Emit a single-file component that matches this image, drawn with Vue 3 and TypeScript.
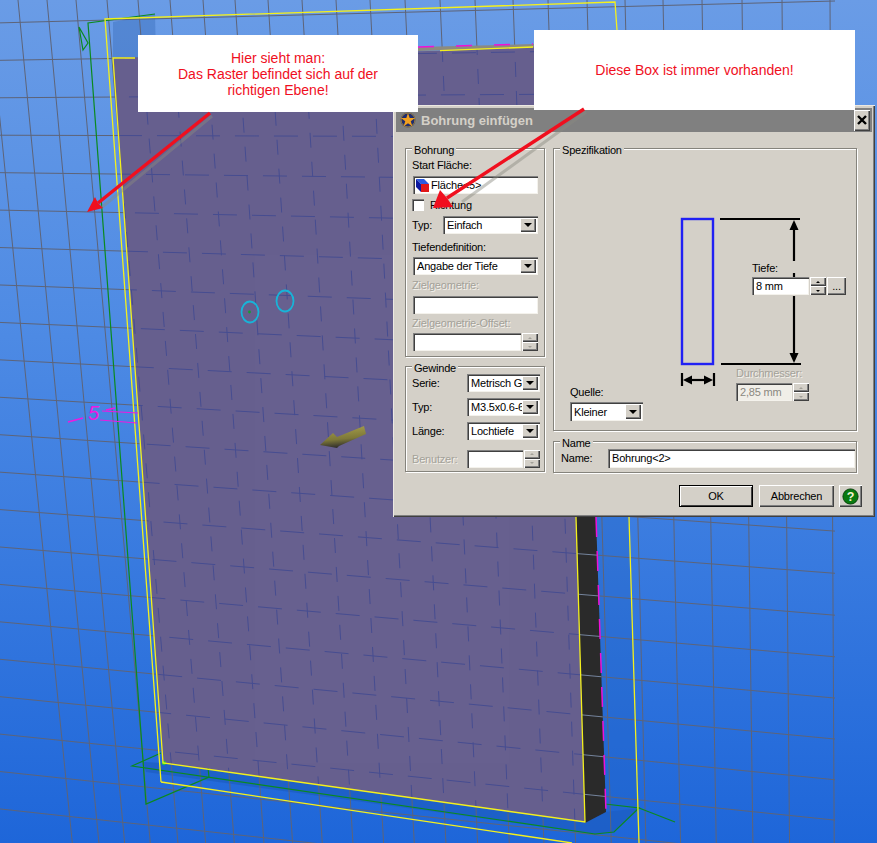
<template>
  <div class="desktop">
    <svg class="scene" width="877" height="843" viewBox="0 0 877 843">
      <defs>
        <linearGradient id="sky" x1="0" y1="0" x2="0" y2="1">
          <stop offset="0" stop-color="#6a9ce6" />
          <stop offset="0.4" stop-color="#4d8ae4" />
          <stop offset="1" stop-color="#1e66d9" />
        </linearGradient>
        <linearGradient id="shaft" x1="0.3" y1="0" x2="0.5" y2="1">
          <stop offset="0" stop-color="#a8a04c" />
          <stop offset="0.6" stop-color="#7d7838" />
          <stop offset="1" stop-color="#26242c" />
        </linearGradient>
        <clipPath id="faceClip"><polygon :points="facePoints" /></clipPath>
        <clipPath id="sideClip"><polygon :points="sidePoints" /></clipPath>
      </defs>

      <rect width="877" height="843" fill="url(#sky)" />

      <!-- shadow bands round the part -->
      <polygon points="113,22 155,14 156,58 113,58" fill="#2f62b0" opacity="0.35" />
      <polygon points="596,517 629,517 639,808 606,812" fill="#1f5fc0" opacity="0.3" />
      <polygon points="143,762 163,763 585,823 606,812 640,808 614,832 595,834 146,772" fill="#1d5cc0" opacity="0.7" />

      <!-- grid -->
      <g stroke="#5e6478" stroke-width="1" fill="none">
        <line v-for="l in gridLines" :key="l.id" :x1="l.x1" :y1="l.y1" :x2="l.x2" :y2="l.y2" />
      </g>

      <!-- part -->
      <polygon :points="sidePoints" fill="#2a2a2a" />
      <g clip-path="url(#sideClip)" stroke="#75849c" stroke-width="1">
        <line v-for="l in hLines" :key="l.id" :x1="l.x1" :y1="l.y1" :x2="l.x2" :y2="l.y2" />
      </g>
      <polygon :points="facePoints" fill="#67608f" />
      <polygon points="418,47 535,44 535,47.5 418,51" fill="#8c8a80" />
      <g clip-path="url(#faceClip)" stroke="#414a92" stroke-width="1" opacity="0.85">
        <line
          v-for="(l, i) in vLines"
          :key="l.id"
          :x1="l.x1"
          :y1="l.y1"
          :x2="l.x2"
          :y2="l.y2"
          stroke-dasharray="15 14"
          :stroke-dashoffset="i * 7"
        />
        <line
          v-for="(l, i) in hLines"
          :key="l.id"
          :x1="l.x1"
          :y1="l.y1"
          :x2="l.x2"
          :y2="l.y2"
          stroke-dasharray="24 15"
          :stroke-dashoffset="i * 11"
        />
      </g>

      <!-- green construction plane -->
      <g stroke="#0b8a1e" stroke-width="1.2" fill="none">
        <polyline points="155,14 88,23 143,760 146,804 209,777 208,768" />
        <polyline points="79,27 88,43 83,50 79,27" />
        <polyline points="161,753 132,766 595,834 614,832 639,808 605,804" />
        <line x1="639" y1="808" x2="675" y2="822" />
      </g>
      <circle cx="164" cy="763" r="2" fill="#22e022" />

      <!-- yellow outlines -->
      <g stroke="#f4f01c" stroke-width="1.3" fill="none">
        <polyline points="161,782 105,19 615,2 617,30" />
        <polyline points="629,517 639,843" />
        <polyline points="161,782 572,843" />
        <polyline points="135,58 113,58 163,763 585,822 576,517" />
        <polyline points="440,50.7 533,47" />
      </g>
      <polyline points="596,517 606,812" stroke="#f010d8" stroke-width="1.5" stroke-dasharray="20 14" fill="none" />
      <polyline points="418,47 533,44" stroke="#f010d8" stroke-width="1.5" stroke-dasharray="16 22" fill="none" />

      <!-- sketch circles -->
      <ellipse cx="250" cy="312" rx="8.5" ry="10.5" fill="none" stroke="#18b4d8" stroke-width="1.8" />
      <ellipse cx="285" cy="301" rx="8.5" ry="10.5" fill="none" stroke="#18b4d8" stroke-width="1.8" />
      <circle cx="249.5" cy="312" r="1.4" fill="#12a030" />

      <!-- dimension -->
      <g stroke="#f018e0" stroke-width="1" fill="#f018e0">
        <line x1="102" y1="411" x2="138" y2="413" />
        <line x1="100" y1="420" x2="137" y2="423" />
        <line x1="68" y1="422" x2="83" y2="418" stroke-width="1.6" />
        <line x1="106" y1="410" x2="115" y2="408" stroke-width="1.6" />
      </g>
      <text x="88" y="420" class="dim-text">5</text>

      <!-- direction arrow -->
      <polygon points="320,445 333,433 337,437 364,426 366,434 339,446 337,448" fill="url(#shaft)" />
    </svg>

    <div class="dialog">
      <div class="titlebar">
        <svg class="title-icon" width="16" height="16" viewBox="0 0 17 17">
          <circle cx="8.5" cy="8.5" r="8" fill="#1f2c6e" />
          <circle cx="8.5" cy="8.5" r="7.4" fill="none" stroke="#c8a030" stroke-width="0.8" />
          <path d="M8.5 1 L10.3 6.4 L16 6.4 L11.4 9.8 L13.2 15.4 L8.5 12 L3.8 15.4 L5.6 9.8 L1 6.4 L6.7 6.4 Z" fill="#f0a020" />
        </svg>
        <span class="title-text">Bohrung einfügen</span>
        <button class="close raised">
          <svg width="10" height="10" viewBox="0 0 10 10"><path d="M1 1 L9 9 M9 1 L1 9" stroke="#000" stroke-width="2.4" /></svg>
        </button>
      </div>

      <div class="body">
        <div class="col-left">
          <div class="group bohrung">
            <span class="legend">Bohrung</span>
            <div class="label">Start Fläche:</div>
            <div class="field face-field m4">
              <svg width="15" height="15" viewBox="0 0 15 15">
                <polygon points="1,1 9,1 14,6 6,6" fill="#2a5ae0" />
                <polygon points="1,1 6,6 6,14 1,9" fill="#0c18a0" />
                <rect x="6" y="6" width="8" height="8" fill="#e01818" />
              </svg>
              <span>Fläche&lt;5&gt;</span>
            </div>
            <div class="check-row m4">
              <span class="checkbox"></span>
              <span>Richtung</span>
            </div>
            <div class="type-row m5">
              <span>Typ:</span>
              <div class="combo"><span class="combo-text">Einfach</span><span class="combo-btn raised"><i class="tri"></i></span></div>
            </div>
            <div class="label m6">Tiefendefinition:</div>
            <div class="combo m3"><span class="combo-text">Angabe der Tiefe</span><span class="combo-btn raised"><i class="tri"></i></span></div>
            <div class="label off m3">Zielgeometrie:</div>
            <div class="field m4"></div>
            <div class="label off m2">Zielgeometrie-Offset:</div>
            <div class="spin-row m3">
              <div class="field"></div>
              <div class="spinner off-spin"><span class="raised"><i class="tri up"></i></span><span class="raised"><i class="tri"></i></span></div>
            </div>
          </div>

          <div class="group gewinde">
            <span class="legend">Gewinde</span>
            <div v-for="row in threadRows" :key="row.label" class="thread-row">
              <span>{{ row.label }}</span>
              <div class="combo"><span class="combo-text">{{ row.value }}</span><span class="combo-btn raised"><i class="tri"></i></span></div>
            </div>
            <div class="thread-row user-row">
              <span class="off">Benutzer:</span>
              <div class="spin-row">
                <div class="field"></div>
                <div class="spinner off-spin"><span class="raised"><i class="tri up"></i></span><span class="raised"><i class="tri"></i></span></div>
              </div>
            </div>
          </div>
        </div>

        <div class="col-right">
          <div class="group spec">
            <span class="legend">Spezifikation</span>
            <svg class="drawing" width="304" height="283" viewBox="553 148 304 283">
              <rect x="682" y="219" width="31" height="145" fill="none" stroke="#2020f4" stroke-width="2.4" />
              <g stroke="#000" stroke-width="2.2" fill="#000">
                <line x1="720" y1="219" x2="800" y2="219" />
                <line x1="721" y1="364" x2="801" y2="364" />
                <line x1="794" y1="225" x2="794" y2="261" />
                <line x1="794" y1="273" x2="794" y2="277" />
                <line x1="794" y1="296" x2="794" y2="358" />
                <line x1="682" y1="373" x2="682" y2="386" />
                <line x1="714" y1="373" x2="714" y2="386" />
                <line x1="688" y1="380" x2="708" y2="380" />
              </g>
              <polygon points="794,220 789.5,230 798.5,230" fill="#000" />
              <polygon points="794,363 789.5,353 798.5,353" fill="#000" />
              <polygon points="683,380 692,375.5 692,384.5" fill="#000" />
              <polygon points="713,380 704,375.5 704,384.5" fill="#000" />
            </svg>

            <div class="depth">
              <span class="label">Tiefe:</span>
              <div class="depth-row">
                <div class="field value">8 mm</div>
                <div class="spinner"><span class="raised"><i class="tri up"></i></span><span class="raised"><i class="tri"></i></span></div>
                <button class="dots raised">...</button>
              </div>
            </div>

            <div class="diameter">
              <span class="label off">Durchmesser:</span>
              <div class="depth-row">
                <div class="field value off-value">2,85 mm</div>
                <div class="spinner off-spin"><span class="raised"><i class="tri up"></i></span><span class="raised"><i class="tri"></i></span></div>
              </div>
            </div>

            <div class="source">
              <span class="label">Quelle:</span>
              <div class="combo"><span class="combo-text">Kleiner</span><span class="combo-btn raised"><i class="tri"></i></span></div>
            </div>
          </div>

          <div class="group name">
            <span class="legend">Name</span>
            <span class="name-label">Name:</span>
            <div class="field value">Bohrung&lt;2&gt;</div>
          </div>
        </div>
      </div>

      <div class="footer">
        <button class="btn default">OK</button>
        <button class="btn raised">Abbrechen</button>
        <button class="btn help raised">
          <svg width="17" height="17" viewBox="0 0 19 19">
            <circle cx="9.5" cy="9.5" r="8.5" fill="#0a7a10" stroke="#043c08" />
            <text x="9.5" y="14.5" text-anchor="middle" class="help-mark">?</text>
          </svg>
        </button>
      </div>
    </div>

    <div class="callout callout-left">
      <span>Hier sieht man:<br />Das Raster befindet sich auf der<br />richtigen Ebene!</span>
    </div>

    <div class="callout callout-right">
      <span>Diese Box ist immer vorhanden!</span>
    </div>

    <!-- red annotation arrows sit over the dialog -->
    <svg class="arrows" width="877" height="843" viewBox="0 0 877 843">
      <g stroke="#8a8a80" stroke-width="3" opacity="0.45">
        <line x1="212" y1="116" x2="101" y2="208" />
        <line x1="586" y1="112" x2="462" y2="202" />
      </g>
      <g stroke="#f00f1e" stroke-width="3.4">
        <line x1="210" y1="113" x2="98" y2="203" />
        <line x1="584" y1="109" x2="447" y2="198" />
      </g>
      <polygon points="87,212 95,197 98,203 103,208" fill="#f00f1e" />
      <polygon points="433,208 440,190 447,198 453,207" fill="#f00f1e" />
    </svg>
  </div>
</template>

<script setup lang="ts">
type Seg = { id: string; x1: number; y1: number; x2: number; y2: number };

const facePoints = "113,58 440,50.7 562,46 576,517 585,822 163,763";
const sidePoints = "576,517 596,517 606,812 585,823";

const threadRows = [
  { label: "Serie:", value: "Metrisch G" },
  { label: "Typ:", value: "M3.5x0.6-6" },
  { label: "Länge:", value: "Lochtiefe" },
];

// Grid lines read off the picture: x at the top edge of each vertical line
const topX = [-12, 18, 47, 76, 107, 138, 170, 203, 235, 268, 302, 336, 370, 405, 440, 475, 513, 548, 587, 625, 663, 702, 742, 782, 830];

const vLines: Seg[] = topX.map((x, i) => {
  // verticals lean less the further right they are
  const lean = 0.1 - (0.095 * i) / (topX.length - 1);
  return { id: `v${i}`, x1: x, y1: 0, x2: x + lean * 843, y2: 843 };
});

const hLines: Seg[] = Array.from({ length: 22 }, (_, j) => ({
  id: `h${j}`,
  x1: -5,
  y1: 23 + 37.4 * j,
  x2: 835,
  y2: 1 + 46 * j - 0.152 * j * j,
}));

const gridLines = [...vLines, ...hLines];
</script>

<style>
html,
body {
  margin: 0;
  background: #3a7ae0;
}
</style>

<style scoped>
.desktop {
  position: relative;
  width: 877px;
  height: 843px;
  overflow: hidden;
  font-family: "Liberation Sans", Arial, sans-serif;
  font-size: 11px;
  letter-spacing: -0.2px;
  color: #000;
}

.scene,
.arrows {
  position: absolute;
  left: 0;
  top: 0;
}

.arrows {
  pointer-events: none;
}

.dim-text {
  font: italic 20px "Liberation Sans", sans-serif;
  fill: #f018e0;
}

.callout {
  position: absolute;
  display: flex;
  align-items: center;
  justify-content: center;
  background: #fff;
  color: #f00f1e;
  text-align: center;
  font-size: 14px;
  letter-spacing: 0;
  line-height: 16px;
}

.callout-left {
  left: 138px;
  top: 35px;
  width: 280px;
  height: 77px;
}

.callout-right {
  left: 534px;
  top: 30px;
  width: 321px;
  height: 80px;
}

.dialog {
  position: absolute;
  left: 393px;
  top: 105px;
  width: 482px;
  height: 412px;
  box-sizing: border-box;
  background: #d4d0c8;
  box-shadow: inset 1px 1px 0 #ece9e2, inset -1px -1px 0 #404040, inset -2px -2px 0 #808080;
}

.titlebar {
  display: flex;
  align-items: center;
  height: 24px;
  margin: 3px 3px 0;
  padding: 0 2px 0 3px;
  background: #808080;
}

.title-icon {
  margin-left: 1px;
}

.title-text {
  margin-left: 5px;
  font-size: 13px;
  font-weight: 700;
  letter-spacing: 0;
  color: #d4d0c8;
}

.raised {
  box-sizing: border-box;
  background: #d4d0c8;
  box-shadow: inset 1px 1px 0 #fff, inset -1px -1px 0 #404040, inset -2px -2px 0 #808080;
}

button {
  border: 0;
  padding: 0;
  font: inherit;
  letter-spacing: inherit;
  color: inherit;
}

.close {
  display: flex;
  align-items: center;
  justify-content: center;
  width: 16px;
  height: 21px;
  margin-left: auto;
}

.body {
  display: grid;
  grid-template-columns: 140px 304px;
  column-gap: 8px;
  padding: 16px 0 0 12px;
}

.col-left,
.col-right {
  display: flex;
  flex-direction: column;
}

.col-left {
  gap: 9px;
}

.col-right {
  gap: 10px;
}

.group {
  position: relative;
  box-sizing: border-box;
  border: 1px solid #85837c;
  box-shadow: 1px 1px 0 #fff, inset 1px 1px 0 #fff;
}

.legend {
  position: absolute;
  left: 6px;
  top: -6px;
  padding: 0 2px;
  background: #d4d0c8;
  line-height: 14px;
}

.bohrung {
  height: 209px;
  padding: 9px 6px 0;
}

.gewinde {
  display: flex;
  flex-direction: column;
  gap: 6px;
  height: 106px;
  padding: 6px 4px 0 6px;
}

.label {
  height: 14px;
  line-height: 14px;
  white-space: nowrap;
}

.off {
  color: #a3a199;
  text-shadow: 1px 1px 0 #f4f2ec;
}

.m2 { margin-top: 2px; }
.m3 { margin-top: 3px; }
.m4 { margin-top: 4px; }
.m5 { margin-top: 5px; }
.m6 { margin-top: 6px; }

.field,
.combo {
  box-sizing: border-box;
  display: flex;
  align-items: center;
  height: 18px;
  background: #fff;
  box-shadow: inset 1px 1px 0 #808080, inset 2px 2px 0 #404040, inset -1px -1px 0 #f4f2ec;
}

.bohrung > .field,
.bohrung > .combo,
.spin-row {
  margin-left: 1px;
}

.bohrung > .field,
.bohrung > .combo {
  width: 125px;
}

.face-field {
  padding-left: 2px;
  gap: 1px;
}

.check-row {
  display: flex;
  align-items: center;
  gap: 6px;
  height: 13px;
}

.checkbox {
  box-sizing: border-box;
  width: 12px;
  height: 12px;
  background: #fff;
  box-shadow: inset 1px 1px 0 #808080, inset 2px 2px 0 #404040;
}

.type-row {
  display: flex;
  align-items: center;
  justify-content: space-between;
  height: 18px;
}

.type-row .combo {
  width: 95px;
}

.combo {
  padding: 2px;
}

.combo-text {
  flex: 1;
  min-width: 0;
  padding-left: 2px;
  white-space: nowrap;
}

.combo-btn {
  display: flex;
  align-items: center;
  justify-content: center;
  flex: none;
  width: 16px;
  height: 100%;
}

.tri {
  width: 0;
  height: 0;
  border-left: 4px solid transparent;
  border-right: 4px solid transparent;
  border-top: 4px solid #000;
}

.spin-row {
  display: flex;
  gap: 1px;
}

.spin-row .field {
  flex: 1;
  height: 18px;
}

.spinner {
  display: flex;
  flex: none;
  flex-direction: column;
  width: 16px;
  height: 18px;
}

.spinner span {
  display: flex;
  align-items: center;
  justify-content: center;
  height: 9px;
}

.spinner .tri {
  border-left-width: 2.5px;
  border-right-width: 2.5px;
  border-top-width: 2.5px;
}

.spinner .tri.up {
  border-top: 0;
  border-bottom: 2.5px solid #000;
}

.off-spin .tri {
  border-top-color: #a3a199;
}

.off-spin .tri.up {
  border-bottom-color: #a3a199;
}

.thread-row {
  display: grid;
  grid-template-columns: 55px 73px;
  align-items: center;
  height: 18px;
}

.thread-row:first-of-type {
  height: 19px;
}

.thread-row .spin-row {
  margin-left: 0;
}

.user-row {
  margin-top: 3px;
  height: 19px;
}

.spec {
  height: 283px;
}

.drawing {
  position: absolute;
  left: -1px;
  top: -1px;
}

.depth,
.diameter,
.source {
  position: absolute;
  display: flex;
  flex-direction: column;
}

.depth {
  left: 198px;
  top: 112px;
  gap: 2px;
}

.diameter {
  left: 182px;
  top: 217px;
  gap: 3px;
}

.source {
  left: 16px;
  top: 236px;
  gap: 3px;
}

.source .combo {
  width: 73px;
  height: 19px;
}

.depth-row {
  display: flex;
  gap: 1px;
}

.field.value {
  padding-left: 4px;
  white-space: nowrap;
}

.depth .value {
  width: 57px;
}

.diameter .value {
  width: 56px;
}

.off-value {
  color: #8a8880;
  background: #f0eee8;
}

.dots {
  width: 19px;
  height: 18px;
  line-height: 14px;
}

.name {
  display: flex;
  align-items: center;
  height: 32px;
  padding: 0 1px 0 7px;
}

.name-label {
  flex: none;
  width: 47px;
  margin-top: 2px;
}

.name .field {
  flex: 1;
  height: 19px;
  margin-top: 2px;
}

.footer {
  display: flex;
  justify-content: flex-end;
  gap: 6px;
  margin-top: 12px;
  padding-right: 13px;
}

.btn {
  width: 75px;
  height: 22px;
}

.default {
  width: 74px;
  background: #d4d0c8;
  border: 1px solid #000;
  box-shadow: inset 1px 1px 0 #fff, inset -1px -1px 0 #404040;
}

.help {
  display: flex;
  align-items: center;
  justify-content: center;
  width: 23px;
  margin-left: -1px;
}

.help-mark {
  font: 700 14px "Liberation Sans", sans-serif;
  fill: #f4f4d0;
}
</style>
